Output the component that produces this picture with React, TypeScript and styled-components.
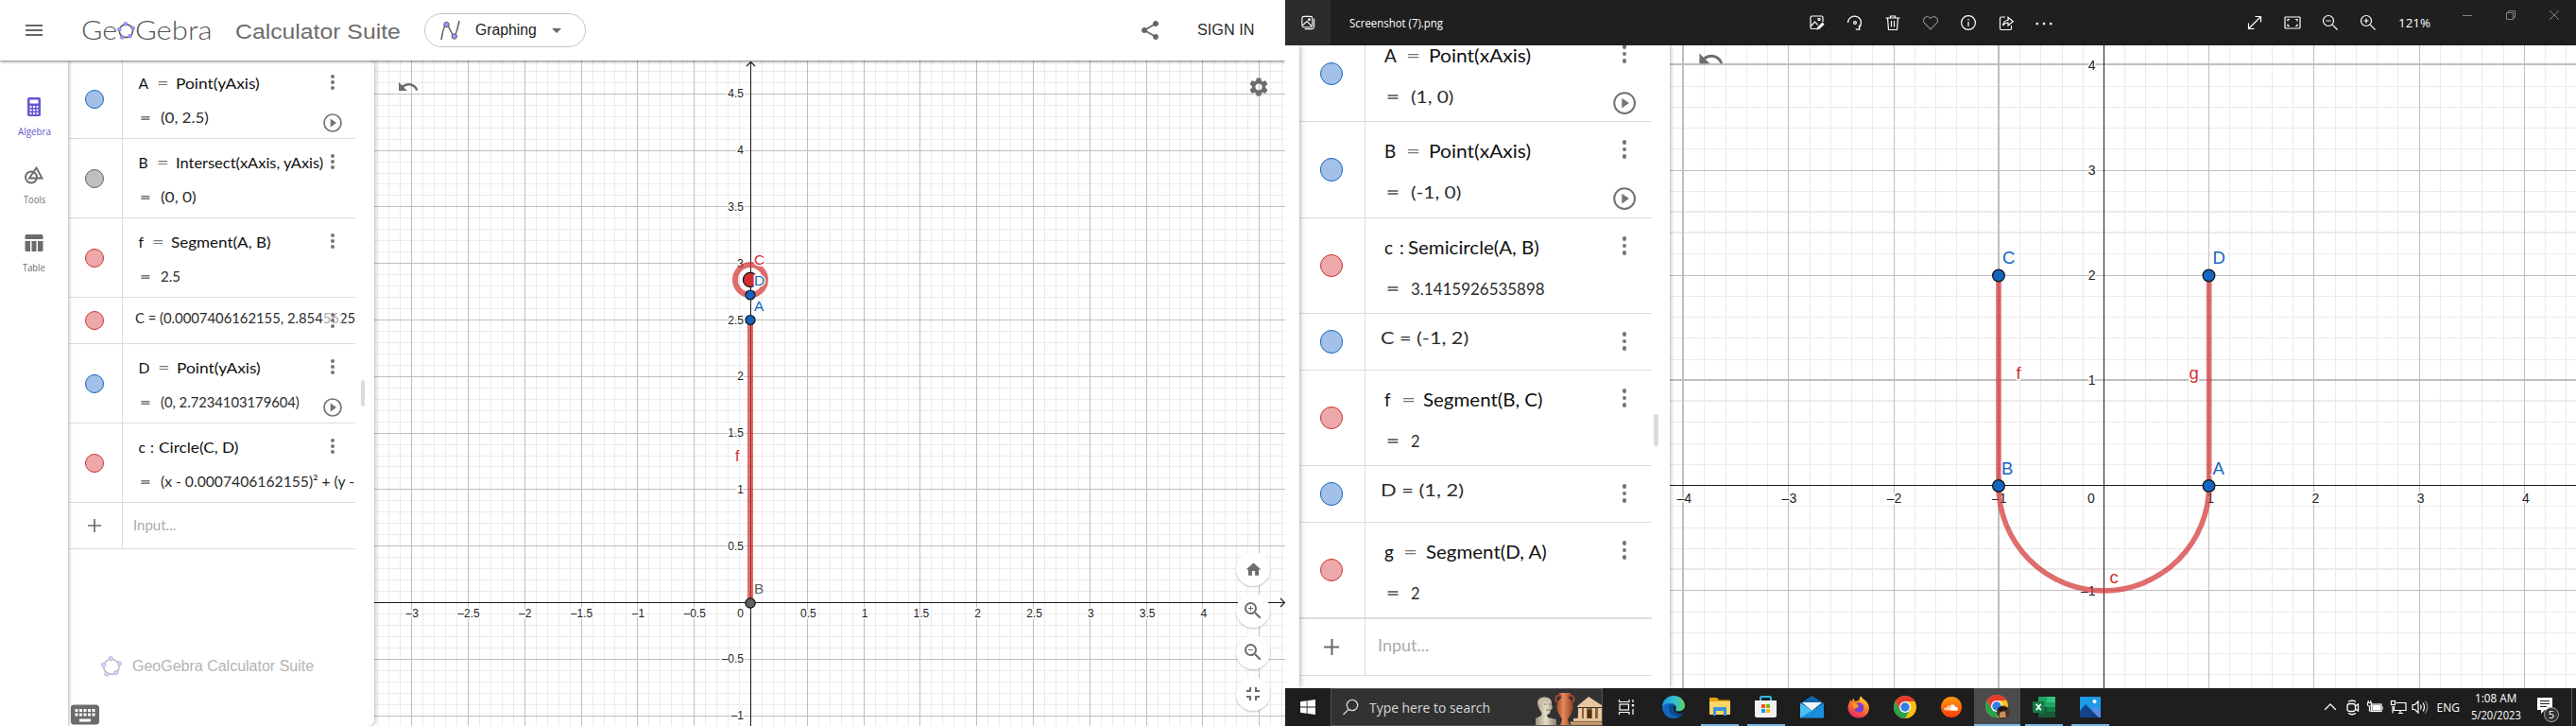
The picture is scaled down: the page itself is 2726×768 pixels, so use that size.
import React, { useLayoutEffect, useRef, ReactNode } from "react";
import styled, { createGlobalStyle, css } from "styled-components";
import {
  MdFullscreenExit, MdHome, MdKeyboard, MdMenu, MdSettings, MdShare, MdUndo, MdZoomIn, MdZoomOut, MdArrowDropDown,
} from "react-icons/md";
import { FaSoundcloud } from "react-icons/fa";

const Global = createGlobalStyle`
  * { box-sizing: border-box; }
  body { margin: 0; background: #fff; font-family: "Liberation Sans", Arial, sans-serif; overflow: hidden; }
  svg { display: block; flex: none; }
`;

/* ---------- text stretched to a given width ---------- */
const FitSpan = styled.span`
  display: inline-block;
  white-space: pre;
  transform-origin: 0 50%;
`;
const FitBox = styled.span<{ $w: number }>`
  display: inline-block;
  width: ${(p) => p.$w}px;
  white-space: pre;
`;
function Fit({ w, children }: { w: number; children: ReactNode }) {
  const ref = useRef<HTMLSpanElement>(null);
  useLayoutEffect(() => {
    const el = ref.current;
    if (el) el.style.transform = `scaleX(${w / el.offsetWidth})`;
  }, [w]);
  return (
    <FitBox $w={w}>
      <FitSpan ref={ref}>{children}</FitSpan>
    </FitBox>
  );
}

/* ---------- shell ---------- */
const Screen = styled.div`
  display: flex;
  width: 2726px;
  height: 768px;
  overflow: hidden;
  background: #fff;
`;
const Browser = styled.div`
  width: 1360px;
  height: 768px;
  display: flex;
  flex-direction: column;
  overflow: hidden;
`;
const Desktop = styled.div`
  width: 1366px;
  height: 768px;
  display: flex;
  flex-direction: column;
  overflow: hidden;
`;
const Body = styled.div`
  flex: 1;
  min-height: 0;
  display: flex;
  overflow: hidden;
`;

/* ---------- GeoGebra header ---------- */
const Header = styled.header`
  height: 64px;
  flex: none;
  display: flex;
  align-items: center;
  background: #fff;
  position: relative;
  z-index: 4;
  padding: 0 32px 0 24px;
  color: #666;
  box-shadow: 0 1px 3px rgba(0, 0, 0, 0.55);
`;
const Brand = styled.div`
  display: flex;
  align-items: center;
  margin-left: 38px;
  width: 163px;
  font: 300 26.5px/36px Lato, sans-serif;
  color: #555;
`;
const Suite = styled.div`
  width: 200px;
  font-size: 22.5px;
  line-height: 36px;
  padding-top: 3px;
  color: #6b6b6b;
`;
const AppPicker = styled.div`
  width: 171px;
  height: 36px;
  border: 1px solid #c4c4c4;
  border-radius: 18px;
  display: flex;
  align-items: center;
  padding-left: 16px;
  color: #1c1c1f;
  font-size: 16px;
  & > span { margin: 0 9px 0 16px; }
  & > svg:last-child { color: #666; }
`;
const HeaderEnd = styled.div`
  margin-left: auto;
  display: flex;
  align-items: center;
  gap: 38px;
  color: #666;
  font-size: 16px;
  & > span { color: #2a2a2a; }
`;

/* ---------- left navigation ---------- */
const Nav = styled.nav`
  width: 72px;
  flex: none;
  padding-top: 32px;
  background: #fff;
  position: relative;
  z-index: 3;
  box-shadow: 0 0 5px rgba(0, 0, 0, 0.42);
`;
const NavItem = styled.div<{ $on?: boolean }>`
  height: 72px;
  display: flex;
  flex-direction: column;
  align-items: center;
  padding-top: 6px;
  color: ${(p) => (p.$on ? "#6557d2" : "#6e6e6e")};
  font: 10.5px/14px "Open Sans", sans-serif;
  & > svg { margin-bottom: 8px; }
`;

/* ---------- algebra panel ---------- */
const Panel = styled.section<{ $w: number; $rounded?: boolean }>`
  width: ${(p) => p.$w}px;
  flex: none;
  background: #fff;
  position: relative;
  z-index: 2;
  display: flex;
  overflow: visible;
  border-radius: ${(p) => (p.$rounded ? "0 5px 7px 0" : "0")};
  box-shadow: 0 0 5px rgba(0, 0, 0, 0.42);
`;
const Edging = styled.div`
  width: 15px;
  flex: none;
  background: #fff;
  position: relative;
  z-index: 3;
  box-shadow: 0 0 6px rgba(0, 0, 0, 0.42);
`;
const List = styled.div<{ $w: number; $up: number }>`
  width: ${(p) => p.$w}px;
  flex: none;
  margin-top: -${(p) => p.$up}px;
  overflow: hidden;
`;
const Row = styled.div<{ $h: number; $thick?: boolean }>`
  position: relative;
  height: ${(p) => p.$h}px;
  border-bottom: ${(p) => (p.$thick ? 2 : 1)}px solid #dcdcdc;
  display: flex;
  overflow: hidden;
`;
const Gutter = styled.div<{ $s: number }>`
  width: ${(p) => Math.round(58 * p.$s)}px;
  border-right: 1px solid #dcdcdc;
  display: flex;
  align-items: center;
  justify-content: center;
  padding-right: 1px;
  flex: none;
`;
const tones = {
  blue: ["#a3c1e8", "#1565c0"],
  grey: ["#bfbfbf", "#616161"],
  red: ["#eda9a9", "#d32f2f"],
};
const Marble = styled.div<{ $s: number; $tone: keyof typeof tones }>`
  width: ${(p) => 20 * p.$s}px;
  height: ${(p) => 20 * p.$s}px;
  border-radius: 50%;
  background: ${(p) => tones[p.$tone][0]};
  border: ${(p) => p.$s}px solid ${(p) => tones[p.$tone][1]};
`;
const Cell = styled.div<{ $s: number; $single?: boolean }>`
  flex: 1;
  min-width: 0;
  overflow: hidden;
  padding: ${(p) => (p.$single ? 3 : 7.4) * p.$s}px 0 0 ${(p) => (p.$single ? 13 : 16.5) * p.$s}px;
  font-family: Lato, sans-serif;
  font-size: ${(p) => (p.$single ? 15 : 15.6) * p.$s}px;
  color: ${(p) => (p.$single ? "#2b2b2b" : "#111")};
`;
const Line = styled.div<{ $s: number; $value?: boolean }>`
  display: flex;
  white-space: pre;
  height: ${(p) => 36 * p.$s}px;
  line-height: ${(p) => 36 * p.$s}px;
  ${(p) => p.$value && css`
    padding-left: ${1.8 * p.$s}px;
    font-size: ${15 * p.$s}px;
    color: #2b2b2b;
  `}
`;
const Slot = styled.span<{ $w: number; $grey?: boolean; $bold?: boolean }>`
  width: ${(p) => p.$w}px;
  flex: none;
  ${(p) => p.$grey && css`color: #777;`}
  ${(p) => p.$bold && css`font-weight: 900;`}
`;
const Placeholder = styled.div<{ $s: number }>`
  padding-left: ${(p) => 11 * p.$s}px;
  font: ${(p) => 15 * p.$s}px/${(p) => 46 * p.$s}px Lato, sans-serif;
  color: #aaa;
`;
const Dots = styled.div<{ $s: number; $fade?: boolean }>`
  position: absolute;
  top: ${(p) => 12 * p.$s}px;
  right: ${(p) => (p.$fade ? 14 : 18) * p.$s}px;
  width: ${(p) => (p.$fade ? 20 : 12) * p.$s}px;
  height: ${(p) => 24 * p.$s}px;
  display: flex;
  flex-direction: column;
  align-items: center;
  justify-content: center;
  gap: ${(p) => 2 * p.$s}px;
  ${(p) => p.$fade && css`background: rgba(255, 255, 255, 0.6);`}
  & > i {
    width: ${(p) => 4 * p.$s}px;
    height: ${(p) => 4 * p.$s}px;
    border-radius: 50%;
    background: #747474;
  }
`;
const PlaySpot = styled.div<{ $s: number }>`
  position: absolute;
  right: ${(p) => 14 * p.$s}px;
  top: ${(p) => 57 * p.$s}px;
`;
const Handle = styled.div<{ $s: number; $top: number; $left: number }>`
  width: ${(p) => 4 * p.$s}px;
  height: ${(p) => 28 * p.$s}px;
  margin: ${(p) => p.$top}px 0 0 ${(p) => p.$left}px;
  border-radius: 2px;
  background: #dcdce0;
`;

type Tone = keyof typeof tones;
interface Item {
  h: number; tone: Tone; text?: string; name?: string; sign?: string; expr?: string;
  nw?: number; ew?: number; w: number; value?: string; vw?: number; play?: boolean; thick?: boolean; fade?: boolean;
}

function AlgebraRow({ item, s }: { item: Item; s: number }) {
  const single = !!item.text;
  return (
    <Row $h={item.h} $thick={item.thick}>
      <Gutter $s={s}><Marble $s={s} $tone={item.tone} /></Gutter>
      <Cell $s={s} $single={single}>
        {single ? (
          <Line $s={s}><Fit w={item.w}>{item.text}</Fit></Line>
        ) : (
          <>
            <Line $s={s}>
              <Slot $w={item.nw!}>{item.name}</Slot>
              <Slot $w={item.ew!} $grey={item.sign === "="}>
                {item.sign === "=" ? <Fit w={12.5 * s}>=</Fit> : item.sign}
              </Slot>
              <Fit w={item.w}>{item.expr}</Fit>
            </Line>
            <Line $s={s} $value>
              <Slot $w={21.7 * s} $grey $bold><Fit w={12 * s}>=</Fit></Slot>
              <Fit w={item.vw!}>{item.value}</Fit>
            </Line>
          </>
        )}
      </Cell>
      <Dots $s={s} $fade={item.fade}><i /><i /><i /></Dots>
      {item.play && (
        <PlaySpot $s={s}>
          <svg width={20 * s} height={20 * s} viewBox="0 0 20 20">
            <circle cx="10" cy="10" r="9" fill="none" stroke="#747474" strokeWidth="1.7" />
            <path d="M7.7 5.6 L14 10 L7.7 14.4 Z" fill="#747474" />
          </svg>
        </PlaySpot>
      )}
    </Row>
  );
}

function InputRow({ h, s }: { h: number; s: number }) {
  return (
    <Row $h={h}>
      <Gutter $s={s}>
        <svg width={14 * s} height={14 * s} viewBox="0 0 14 14">
          <path d="M7 0V14M0 7H14" stroke="#6a6a6a" strokeWidth="1.7" />
        </svg>
      </Gutter>
      <Placeholder $s={s}><Fit w={45 * s}>Input...</Fit></Placeholder>
    </Row>
  );
}

const leftItems: Item[] = [
  { h: 84, tone: "blue", name: "A", sign: "=", expr: "Point(yAxis)", nw: 19, ew: 20, w: 89, value: "(0, 2.5)", vw: 51, play: true },
  { h: 84, tone: "grey", name: "B", sign: "=", expr: "Intersect(xAxis, yAxis)", nw: 19, ew: 20, w: 156, value: "(0, 0)", vw: 38 },
  { h: 84, tone: "red", name: "f", sign: "=", expr: "Segment(A, B)", nw: 14.5, ew: 19.5, w: 106, value: "2.5", vw: 21 },
  { h: 49, tone: "red", text: "C = (0.0007406162155, 2.8545625", w: 233, fade: true },
  { h: 84, tone: "blue", name: "D", sign: "=", expr: "Point(yAxis)", nw: 20.5, ew: 20, w: 89, value: "(0, 2.7234103179604)", vw: 146.5, play: true },
  { h: 84, tone: "red", name: "c", sign: ":", expr: "Circle(C, D)", nw: 12.5, ew: 9, w: 84, value: "(x - 0.0007406162155)² + (y -", vw: 205 },
];
const rightItems: Item[] = [
  { h: 101, tone: "blue", name: "A", sign: "=", expr: "Point(xAxis)", nw: 23, ew: 24, w: 108, value: "(1, 0)", vw: 46, play: true },
  { h: 102, tone: "blue", name: "B", sign: "=", expr: "Point(xAxis)", nw: 23, ew: 24, w: 108, value: "(-1, 0)", vw: 53, play: true },
  { h: 101, tone: "red", name: "c", sign: ":", expr: "Semicircle(A, B)", nw: 16, ew: 9.5, w: 139, value: "3.1415926535898", vw: 142 },
  { h: 60, tone: "blue", text: "C = (-1, 2)", w: 93 },
  { h: 101, tone: "red", name: "f", sign: "=", expr: "Segment(B, C)", nw: 18, ew: 23.5, w: 127, value: "2", vw: 10 },
  { h: 60, tone: "blue", text: "D = (1, 2)", w: 88 },
  { h: 102, tone: "red", name: "g", sign: "=", expr: "Segment(D, A)", nw: 20, ew: 24.5, w: 128, value: "2", vw: 10, thick: true },
];

const PanelColumn = styled.div`
  display: flex;
  flex-direction: column;
`;
const Watermark = styled.div`
  display: flex;
  flex: none;
  align-items: center;
  gap: 11px;
  margin: 112px 0 0 35px;
  height: 24px;
  font-size: 16px;
  color: #b4b4b4;
`;
const KeyboardButton = styled.div`
  margin-top: 21px;
  color: #6c6c6c;
`;

/* ---------- graph ---------- */
const Graph = styled.div`
  flex: 1;
  min-width: 0;
  position: relative;
  background: #fff;
`;
const Corner = styled.div<{ $x: number; $y: number; $ink: string }>`
  position: absolute;
  left: ${(p) => p.$x}px;
  top: ${(p) => p.$y}px;
  color: ${(p) => p.$ink};
`;
const ZoomStack = styled.div`
  position: absolute;
  right: 16px;
  bottom: 16px;
  display: flex;
  flex-direction: column;
  gap: 8px;
`;
const RoundButton = styled.div`
  width: 36px;
  height: 36px;
  border-radius: 50%;
  background: #fff;
  color: #6c6c6c;
  display: flex;
  align-items: center;
  justify-content: center;
  box-shadow: 0 1px 2px rgba(0, 0, 0, 0.25);
`;
const Tick = styled.text`
  font-family: "Liberation Sans", Arial, sans-serif;
  fill: #222;
  stroke: #fff;
  stroke-width: 3px;
  paint-order: stroke;
`;
const minus = (n: number) => (n < 0 ? "–" + -n : String(n));

interface GridProps {
  x0: number; x1: number; y0: number; y1: number; ox: number; oy: number;
  unit: number; minor: number; every: number; wideX?: number[]; wideY?: number[];
}
function Grid({ x0, x1, y0, y1, ox, oy, unit, minor, every, wideX = [], wideY = [] }: GridProps) {
  const small: ReactNode[] = [];
  const big: ReactNode[] = [];
  for (let i = Math.ceil((x0 - ox) / (unit * minor)); i * unit * minor + ox < x1; i++) {
    const major = i % every === 0;
    const wide = wideX.includes(i);
    (major ? big : small).push(
      <rect key={"x" + i} x={Math.floor(ox + i * unit * minor) - (wide ? 1 : 0)} y={y0} width={wide ? 2 : 1} height={y1 - y0} fill={major ? "#bfbfbf" : "#ebebeb"} />,
    );
  }
  for (let j = Math.ceil((oy - y1) / (unit * minor)); oy - j * unit * minor > y0; j++) {
    const major = j % every === 0;
    const wide = wideY.includes(j);
    (major ? big : small).push(
      <rect key={"y" + j} x={x0} y={Math.floor(oy - j * unit * minor) - (wide ? 1 : 0)} width={x1 - x0} height={wide ? 2 : 1} fill={major ? "#bfbfbf" : "#ebebeb"} />,
    );
  }
  return <g shapeRendering="crispEdges">{small}{big}</g>;
}

function Point({ x, y, r, fill = "#1565c0" }: { x: number; y: number; r: number; fill?: string }) {
  return <circle cx={x} cy={y} r={r} fill={fill} stroke="#111" strokeWidth={1.2} />;
}
const BLUE = "#1565c0";
const RED = "#d32f2f";

function LeftPlot() {
  const ox = 794.5, oy = 637.5, u = 119.6;
  const xs = [-3, -2.5, -2, -1.5, -1, -0.5, 0.5, 1, 1.5, 2, 2.5, 3, 3.5, 4];
  const ys = [4.5, 4, 3.5, 3, 2.5, 2, 1.5, 1, 0.5, -0.5, -1];
  return (
    <svg width={964} height={704} viewBox="396 64 964 704">
      <Grid x0={396} x1={1360} y0={64} y1={768} ox={ox} oy={oy} unit={u} minor={0.1} every={5} />
      <rect x={396} y={637} width={963} height={1} fill="#1c1c1f" />
      <rect x={794} y={66} width={1} height={702} fill="#1c1c1f" />
      <path d="M1355 633 L1359.5 637.5 L1355 642 M790 70 L794.5 65.5 L799 70" fill="none" stroke="#1c1c1f" strokeWidth="1.2" />
      {xs.map((v) => <Tick key={v} x={ox + v * u + (v < 0 ? 0.5 : 1)} y={653} fontSize={12} textAnchor="middle">{minus(v)}</Tick>)}
      {ys.map((v) => <Tick key={v} x={787} y={oy - v * u + 4} fontSize={12} textAnchor="end">{minus(v)}</Tick>)}
      <Tick x={783.5} y={653} fontSize={12} textAnchor="middle">0</Tick>
      <rect x={791} y={338} width={6} height={299} fill={RED} opacity={0.7} />
      <circle cx={794} cy={296} r={16} fill="none" stroke={RED} strokeOpacity={0.7} strokeWidth={6} />
      <Point x={794} y={296} r={7.6} fill={RED} />
      <Point x={794} y={312} r={5} />
      <Point x={794} y={338.5} r={5} />
      <Point x={794} y={638} r={5.2} fill="#616161" />
      <Tick x={798} y={279.5} fontSize={15.5} style={{ fill: RED }}>C</Tick>
      <Tick x={798} y={302} fontSize={15.5} style={{ fill: BLUE }}>D</Tick>
      <Tick x={798} y={329} fontSize={15.5} style={{ fill: BLUE }}>A</Tick>
      <Tick x={778} y={488} fontSize={16} style={{ fill: RED }}>f</Tick>
      <Tick x={798} y={628} fontSize={15.5} style={{ fill: "#616161" }}>B</Tick>
    </svg>
  );
}

function RightPlot() {
  const ox = 2226.5, oy = 513.6, u = 111.2;
  return (
    <svg width={959} height={680} viewBox="1767 48 959 680">
      <Grid x0={1767} x1={2726} y0={48} y1={728} ox={ox} oy={oy} unit={u} minor={0.2} every={5}
        wideX={[-20, -5]} wideY={[20, 13, 12, 5, 4, -4]} />
      <rect x={1767} y={513} width={959} height={1} fill="#1c1c1f" />
      <rect x={2226} y={48} width={1} height={680} fill="#1c1c1f" />
      {[-4, -3, -2, -1, 1, 2, 3, 4].map((v) => (
        <Tick key={v} x={ox + v * u + (v < 0 ? 0.5 : 1.5)} y={532} fontSize={14} textAnchor="middle">{minus(v)}</Tick>
      ))}
      {[4, 3, 2, 1, -1].map((v) => (
        <Tick key={v} x={2217.5} y={oy - v * u + 5} fontSize={14} textAnchor="end">{minus(v)}</Tick>
      ))}
      <Tick x={2213} y={532} fontSize={14} textAnchor="middle">0</Tick>
      <g fill="none" stroke={RED} strokeOpacity={0.7} strokeWidth={5.6}>
        <path d="M2115 291.5 V513.5" />
        <path d="M2337.7 291.5 V513.5" />
        <path d="M2115 513.5 A111.3 111.3 0 0 0 2337.7 513.5" />
      </g>
      <Point x={2115} y={291.5} r={6.4} />
      <Point x={2337.5} y={291.5} r={6.4} />
      <Point x={2115} y={514} r={6.4} />
      <Point x={2337.5} y={514} r={6.4} />
      <Tick x={2119} y={279} fontSize={18.5} style={{ fill: BLUE }}>C</Tick>
      <Tick x={2341.5} y={279} fontSize={18.5} style={{ fill: BLUE }}>D</Tick>
      <Tick x={2118} y={502} fontSize={18.5} style={{ fill: BLUE }}>B</Tick>
      <Tick x={2341.5} y={502} fontSize={18.5} style={{ fill: BLUE }}>A</Tick>
      <Tick x={2133.5} y={401} fontSize={18.5} style={{ fill: RED }}>f</Tick>
      <Tick x={2316.5} y={401} fontSize={18.5} style={{ fill: RED }}>g</Tick>
      <Tick x={2232.5} y={617} fontSize={18.5} style={{ fill: RED }}>c</Tick>
    </svg>
  );
}

function Pentagon({ size, line, dot, edge, w }: { size: number; line: string; dot: string; edge: string; w: number }) {
  const pts = [[9.8, 2.5], [18.5, 7.5], [15, 16.8], [5.7, 18.2], [2.4, 9]];
  return (
    <svg width={size} height={size} viewBox="0 0 21 21">
      <ellipse cx="10.4" cy="10.8" rx="7.9" ry="7.6" fill="none" stroke={line} strokeWidth={w} />
      {pts.map(([x, y]) => <circle key={x} cx={x} cy={y} r={2.1} fill={dot} stroke={edge} strokeWidth={0.8} />)}
    </svg>
  );
}

/* ---------- photo viewer bar ---------- */
const PhotoBar = styled.div`
  height: 48px;
  flex: none;
  display: flex;
  background: #1f1f1f;
  color: #fff;
  font-family: "Open Sans", sans-serif;
  position: relative;
  z-index: 4;
`;
const BarCell = styled.div<{ $w: number; $bg?: string; $h?: number; $dim?: boolean }>`
  width: ${(p) => p.$w}px;
  height: ${(p) => p.$h ?? 48}px;
  display: flex;
  align-items: center;
  justify-content: center;
  background: ${(p) => p.$bg ?? "transparent"};
  color: ${(p) => (p.$dim ? "#858585" : "#fff")};
  font-size: 13px;
`;
const FileName = styled.div`
  width: 495px;
  padding-left: 20px;
  font-size: 12px;
  line-height: 49px;
`;
const Spacer = styled.div<{ $w?: number }>`
  ${(p) => (p.$w ? css`width: ${p.$w}px;` : css`flex: 1;`)}
`;
function Ico({ d, size = 18, w = 1.2, children }: { d?: string; size?: number; w?: number; children?: ReactNode }) {
  return (
    <svg width={size} height={size} viewBox="0 0 18 18" fill="none" stroke="currentColor" strokeWidth={w}>
      {d && <path d={d} />}
      {children}
    </svg>
  );
}
const tools = [
  <Ico key="e" d="M10 15.5H3.5a1.5 1.5 0 0 1-1.5-1.5V3.5A1.5 1.5 0 0 1 3.5 2h10A1.5 1.5 0 0 1 15 3.5V8M2 13 6.5 8.2l3.2 3.2"><circle cx="11" cy="5.5" r="1.1" /><path d="M8.5 16.5 9.3 13.8 14.5 8.5l2.2 2.2-5.3 5.1z" fill="currentColor" stroke="none" /></Ico>,
  <Ico key="r" d="M1.5 9A7 7 0 1 1 13 14.5M9.8 16.2h4.8M13.5 11.8V16.4"><circle cx="9" cy="9" r="1.4" /></Ico>,
  <Ico key="t" d="M1.5 4H16.500M6.500 4V2H11.500V4M3.500 4 4.500 16.500H13.500L14.500 4M7.500 7V13.500M10.500 7V13.500" />,
  <Ico key="h" d="M9 16 2.200 9.200A4.100 4.100 0 0 1 9 4.500 4.100 4.100 0 0 1 15.800 9.200Z" />,
  <Ico key="i" d="M9 8V13M9 5V6.500"><circle cx="9" cy="9" r="7.400" /></Ico>,
  <Ico key="s" d="M8 3H4A1.500 1.500 0 0 0 2.500 4.500V15A1.500 1.500 0 0 0 4 16.500H13A1.500 1.500 0 0 0 14.500 15V12M5.500 12C6 8.500 8 6.500 11 6.500V3.300L16.300 7.800 11 12V9C8.500 9 7 10 5.500 12Z" />,
  <Ico key="d" size={20}><g fill="currentColor" stroke="none"><circle cx="2.500" cy="10" r="1.200" /><circle cx="9" cy="10" r="1.200" /><circle cx="15.500" cy="10" r="1.200" /></g></Ico>,
];
const views = [
  <Ico key="x" d="M2.500 15.500 15.500 2.500M9.500 2.500h6v6M2.500 9.500v6h6" />,
  <Ico key="f"><rect x="1" y="3" width="16" height="12" rx="0.500" /><path d="M4 7.500V5.500H6M12 5.500h2V7.500M14 10.500v2H12M6 12.500H4V10.500" /></Ico>,
  <Ico key="o" d="M11.200 11.200 16.500 16.500M4.500 7H9.500"><circle cx="7" cy="7" r="5.500" /></Ico>,
  <Ico key="n" d="M11.200 11.200 16.500 16.500M4.500 7H9.500M7 4.500V9.500"><circle cx="7" cy="7" r="5.500" /></Ico>,
];

/* ---------- taskbar ---------- */
const Taskbar = styled.div`
  height: 40px;
  flex: none;
  display: flex;
  background: #1e1e1e;
  color: #fff;
  position: relative;
  z-index: 4;
  font-family: "Open Sans", sans-serif;
`;
const TaskCell = styled.div<{ $w: number; $on?: boolean }>`
  width: ${(p) => p.$w}px;
  height: 40px;
  display: flex;
  align-items: center;
  justify-content: center;
  background: ${(p) => (p.$on ? "#4b4b4b" : "transparent")};
  font-size: 12px;
`;
const AppCell = styled(TaskCell)<{ $bar?: string }>`
  ${(p) => p.$bar && css`
    background-image: linear-gradient(#76b9ed, #76b9ed);
    background-repeat: no-repeat;
    background-position: center bottom;
    background-size: ${p.$bar} 2px;
  `}
`;
const Search = styled.div`
  width: 288px;
  height: 40px;
  display: flex;
  align-items: center;
  background: #323232;
  border: 1px solid #535353;
  padding-left: 11px;
  font-size: 15px;
  color: #d8d8d8;
  & > span { margin-left: 11px; }
  & > svg:last-child { margin-left: auto; }
`;
const Clock = styled(TaskCell)`
  flex-direction: column;
  line-height: 18px;
  text-align: center;
`;
const NotifyCell = styled(TaskCell)`
  position: relative;
`;
const Badge = styled.div`
  position: absolute;
  left: 17px;
  top: 20px;
  width: 16px;
  height: 16px;
  border-radius: 50%;
  border: 1px solid #a5a5a5;
  background: #333;
  font-size: 11px;
  line-height: 14px;
  text-align: center;
`;
const ShowDesktop = styled.div`
  width: 5px;
  height: 40px;
  border-left: 1px solid #5c5c5c;
`;

function SearchArt() {
  return (
    <svg width={70} height={38} viewBox="0 0 70 38">
      <defs>
        <linearGradient id="vase" x1="0" x2="1"><stop offset="0" stopColor="#a5472a" /><stop offset=".4" stopColor="#e58a5e" /><stop offset="1" stopColor="#97401f" /></linearGradient>
        <linearGradient id="bust" x1="0" x2="1"><stop offset="0" stopColor="#9b917e" /><stop offset=".5" stopColor="#e6decb" /><stop offset="1" stopColor="#8b806c" /></linearGradient>
        <linearGradient id="stone" x1="0" x2="0" y1="0" y2="1"><stop offset="0" stopColor="#f0d0a8" /><stop offset="1" stopColor="#b98a5d" /></linearGradient>
      </defs>
      <path d="M0 38V31L6 28C7 26 6 24 4.500 22 1 16 1 11 6 9 12 7 18 11 17 16L18 20 16 22 15 26 12 27 13 30 22 32V38Z" fill="url(#bust)" />
      <path d="M3 15C2 8 15 6 17 13L14 12 11 14 7 13 6 18Z" fill="#c9bfa9" />
      <path d="M9 16h3M14 16h2M11 22h4" stroke="#7e745f" strokeWidth="1" />
      <path d="M25 4H37V6L34.500 9C40 13 41 19 38 25L34 32 36 38H26L28 32 24 25C21 19 22 13 27.500 9L25 6Z" fill="url(#vase)" />
      <path d="M27 7C21 6 20 10 23 14M35 7C41 6 42 10 39 14" fill="none" stroke="#a5472a" strokeWidth="2" />
      <path d="M44 18 56 8 70 17V19H44Z" fill="#e8c7a0" />
      <path d="M46 20H70V31H44Z" fill="#8a633f" />
      <path d="M45 20h4v11h-4zM51 20h3v11h-3zM60 20h3v11h-3zM66 20h4v11h-4z" fill="#edc99e" />
      <path d="M55 22h4v10h-4z" fill="#4d2f18" />
      <path d="M40 31H70V38H37V34H40Z" fill="url(#stone)" />
      <path d="M38 34.500H70" stroke="#8c6744" strokeWidth="1" />
    </svg>
  );
}

function Chrome({ size = 24 }: { size?: number }) {
  return (
    <svg width={size} height={size} viewBox="0 0 24 24">
      <circle cx="12" cy="12" r="12" fill="#fbc116" />
      <path d="M1.600 6A12 12 0 0 0 12 24L17.200 15 12 12 6.800 15Z" fill="#2aa14c" />
      <path d="M12 6H22.400A12 12 0 0 0 1.600 6L6.800 15Z" fill="#e33b2e" />
      <circle cx="12" cy="12" r="6" fill="#fff" />
      <circle cx="12" cy="12" r="4.700" fill="#2f7de9" />
    </svg>
  );
}
const Edge = () => (
  <svg width="24" height="24" viewBox="0 0 24 24">
    <defs>
      <linearGradient id="edgeTop" x1="0" x2="1"><stop offset="0" stopColor="#1b9de2" /><stop offset=".6" stopColor="#35c1c9" /><stop offset="1" stopColor="#62d750" /></linearGradient>
    </defs>
    <circle cx="12" cy="12" r="12" fill="#1168c0" />
    <path d="M0 11C1 4 6 0 12 0 19 0 24 5 24 10.500 24 14 21 16.500 17 16.500 14.500 16.500 13.500 15.500 14.300 14.300 15.500 12.500 14.500 8 9.500 8 4 8 1 9.500 0 12Z" fill="url(#edgeTop)" />
    <path d="M7 13C7 20 13 23 18 22 20 21.500 22 19.500 22.500 18 17 21 11 18 11.500 13 11.700 11 12 10.500 12.500 10 9 8.500 7 10.500 7 13Z" fill="#0b4a94" />
    <path d="M14.300 14.300C13.500 15.500 14.500 16.500 17 16.500 20 16.500 23 15 24 12V17L21 19C16 20 11.500 17 11.700 13 12 11 13 10 13.800 10.500 14.800 12 14.800 13.300 14.300 14.300Z" fill="#1e1e1e" />
  </svg>
);
const Folder = () => (
  <svg width="22" height="20" viewBox="0 0 22 20">
    <path d="M0 1Q0 0 1 0H8L10 2.500H21Q22 2.500 22 3.500V17H0Z" fill="#e5a50f" />
    <path d="M0 4H22V17Q22 18 21 18H1Q0 18 0 17Z" fill="#fbd568" />
    <path d="M4 11Q4 10 5 10H17Q18 10 18 11V19H15V14H7V19H4Z" fill="#3d94dc" />
  </svg>
);
const Store = () => (
  <svg width="23" height="24" viewBox="0 0 23 24">
    <path d="M6 6V2.500Q6 1 7.500 1H15.500Q17 1 17 2.500V6" fill="none" stroke="#30b9ee" strokeWidth="2" />
    <path d="M0 5H23V21Q23 23 21 23H2Q0 23 0 21Z" fill="#f1f1f1" />
    <path d="M7 9h4v4h-4z" fill="#f25022" /><path d="M12 9h4v4h-4z" fill="#7fba00" />
    <path d="M7 14h4v4h-4z" fill="#00a4ef" /><path d="M12 14h4v4h-4z" fill="#ffb900" />
  </svg>
);
const Mail = () => (
  <svg width="25" height="24" viewBox="0 0 25 24">
    <path d="M0 8 12.500 0 25 8V12H0Z" fill="#1263ab" />
    <path d="M2 7H23L12.500 16Z" fill="#eef3f8" />
    <path d="M0 8 25 23H0Z" fill="#35b1ec" />
    <path d="M25 8 0 23.500H25Z" fill="#1a8fdc" />
    <path d="M0 8 12.500 15.500 0 23.500Z" fill="#4ac0f3" />
  </svg>
);
const Firefox = () => (
  <svg width="24" height="24" viewBox="0 0 24 24">
    <defs><linearGradient id="ff" x1=".8" x2=".3" y1="0" y2="1"><stop offset="0" stopColor="#ffe14a" /><stop offset=".4" stopColor="#ff8b1e" /><stop offset="1" stopColor="#ed2268" /></linearGradient></defs>
    <path d="M3 4 4.500 6.500 6 2.500 8 6 12 5 14 0C16 4 20 4.500 22 9 25 16 20 23.500 12 23.500 4 23.500 0 17 .500 11Z" fill="url(#ff)" />
    <path d="M9 8 13 7 17 10 17 15C15 19 8 18 7 14L10 13 12 11Z" fill="#7a3fd6" />
    <path d="M5 8 9 8 12 11 9 13 7 14Z" fill="#ff9b22" />
  </svg>
);
const Cloud = styled.div`
  width: 22px;
  height: 28px;
  border-radius: 50%;
  display: flex;
  align-items: center;
  justify-content: center;
  color: #fff;
  background: linear-gradient(#ff9a0b, #ff3d0c);
  height: 22px;
`;
const ChromeProfile = () => (
  <svg width="26" height="26" viewBox="0 0 26 26">
    <circle cx="12" cy="12" r="12" fill="#fbc116" />
    <path d="M1.600 6A12 12 0 0 0 12 24L17.200 15 12 12 6.800 15Z" fill="#2aa14c" />
    <path d="M12 6H22.400A12 12 0 0 0 1.600 6L6.800 15Z" fill="#e33b2e" />
    <circle cx="12" cy="12" r="6" fill="#fff" />
    <circle cx="12" cy="12" r="4.700" fill="#2f7de9" />
    <circle cx="19" cy="18.500" r="7" fill="#4a3324" />
    <path d="M15 24C14 18 18 16 21 18L22 24Z" fill="#c58f62" />
    <path d="M13 14 18 12 24 15 20 17 15 18Z" fill="#22170f" />
  </svg>
);
const Excel = () => (
  <svg width="24" height="22" viewBox="0 0 24 22">
    <path d="M6 0H15V11H6Z" fill="#21a366" /><path d="M15 0H24V6H15Z" fill="#33c481" />
    <path d="M15 6H24V11H15Z" fill="#21a366" /><path d="M6 11H15V22H6Z" fill="#185c37" /><path d="M15 11H24V16.500H15Z" fill="#107c41" /><path d="M15 16.500H24V22H15Z" fill="#185c37" />
    <rect x="0" y="5" width="12.500" height="12" rx="1" fill="#107c41" />
    <path d="M3.800 7.800 8.800 14.200M8.800 7.800 3.800 14.200" stroke="#fff" strokeWidth="1.800" />
  </svg>
);
const Photos = () => (
  <svg width="22" height="22" viewBox="0 0 22 22">
    <rect width="22" height="22" rx="1" fill="#1e9be6" />
    <path d="M9 18 16 10 22 16V22H9Z" fill="#5b8ae0" />
    <path d="M0 15 6 8 20 22H0Z" fill="#14438c" />
    <circle cx="15.500" cy="5" r="2" fill="#fff" />
  </svg>
);

const apps: { icon: ReactNode; bar?: string; on?: boolean }[] = [
  { icon: <Edge /> },
  { icon: <Folder />, bar: "40px" },
  { icon: <Store />, bar: "40px" },
  { icon: <Mail /> },
  { icon: <Firefox /> },
  { icon: <Chrome /> },
  { icon: <Cloud><FaSoundcloud size={15} /></Cloud> },
  { icon: <ChromeProfile />, bar: "49px", on: true },
  { icon: <Excel />, bar: "40px" },
  { icon: <Photos />, bar: "40px" },
];

export default function App() {
  return (
    <Screen>
      <Global />
      <Browser>
        <Header>
          <MdMenu size={24} />
          <Brand>
            <Fit w={38}>Ge</Fit>
            <Pentagon size={19} line="#5f5f5f" dot="#9999ff" edge="#8484e6" w={1.8} />
            <Fit w={82}>Gebra</Fit>
          </Brand>
          <Suite><Fit w={175}>Calculator Suite</Fit></Suite>
          <AppPicker>
            <svg width="21" height="22" viewBox="0 0 21 22">
              <path d="M1 21C2.500 12 4.500 5 6.500 5 9 5 12 17 14.500 17 16.500 17 18.500 8 20 1" fill="none" stroke="#666" strokeWidth="1.600" />
              <circle cx="6.500" cy="5" r="2.700" fill="#9999ff" stroke="#555" />
              <circle cx="14.800" cy="17.500" r="2.700" fill="#9999ff" stroke="#555" />
            </svg>
            <span><Fit w={65}>Graphing</Fit></span>
            <MdArrowDropDown size={24} />
          </AppPicker>
          <HeaderEnd>
            <MdShare size={24} />
            <span><Fit w={61}>SIGN IN</Fit></span>
          </HeaderEnd>
        </Header>
        <Body>
          <Nav>
            <NavItem $on>
              <svg width="16" height="22" viewBox="0 0 16 22">
                <rect x="1" y="1" width="14" height="20" rx="1.800" fill="#6557d2" />
                <path d="M3.500 3.500h9v4h-9zM3.500 10h2v2h-2zM7 10h2v2H7zM10.500 10h2v2h-2zM3.500 13.500h2v2h-2zM7 13.500h2v2H7zM10.500 13.500h2v2h-2zM3.500 17h2v2h-2zM7 17h2v2H7zM10.500 17h2v2h-2z" fill="#fff" />
              </svg>
              <Fit w={34.5}>Algebra</Fit>
            </NavItem>
            <NavItem>
              <svg width="22" height="22" viewBox="0 0 22 22" fill="none" stroke="#6c6c6c" strokeWidth="1.900">
                <circle cx="8" cy="13.500" r="6" />
                <path d="M13.500 3.500 6 14.500H19.500Z" />
              </svg>
              <Fit w={23}>Tools</Fit>
            </NavItem>
            <NavItem>
              <svg width="20" height="22" viewBox="0 0 20 22" fill="#6c6c6c">
                <path d="M.500 3.500Q.500 2 2 2H18Q19.500 2 19.500 3.500V7H.500ZM.500 9H6V20H2Q.500 20 .500 18.500ZM7.500 9H12.500V20H7.500ZM14 9H19.500V18.500Q19.500 20 18 20H14Z" />
              </svg>
              <Fit w={24}>Table</Fit>
            </NavItem>
          </Nav>
          <Panel $w={324} $rounded>
            <PanelColumn>
              <List $w={304} $up={1}>
                {leftItems.map((it, i) => <AlgebraRow key={i} item={it} s={1} />)}
                <InputRow h={49} s={1} />
              </List>
              <Watermark>
                <Pentagon size={22} line="#b8b8b8" dot="#d4d4ff" edge="#b3b3cc" w={1.4} />
                <Fit w={192}>GeoGebra Calculator Suite</Fit>
              </Watermark>
              <KeyboardButton><MdKeyboard size={36} /></KeyboardButton>
            </PanelColumn>
            <Handle $s={1} $top={338} $left={6} />
          </Panel>
          <Graph>
            <LeftPlot />
            <Corner $x={24} $y={16} $ink="#6c6c6c"><MdUndo size={24} /></Corner>
            <Corner $x={924} $y={16} $ink="#6c6c6c"><MdSettings size={24} /></Corner>
            <ZoomStack>
              <RoundButton><MdHome size={19} /></RoundButton>
              <RoundButton><MdZoomIn size={24} /></RoundButton>
              <RoundButton><MdZoomOut size={24} /></RoundButton>
              <RoundButton><MdFullscreenExit size={24} /></RoundButton>
            </ZoomStack>
          </Graph>
        </Body>
      </Browser>

      <Desktop>
        <PhotoBar>
          <BarCell $w={48} $bg="#2b2b2b">
            <Ico size={17} d="M5 15.500H12.500A3 3 0 0 0 15.500 12.500V4M2.500 11.500 7.500 7 13 12.500">
              <rect x="2" y="1.500" width="11.500" height="12" rx="2" /><circle cx="10" cy="5" r=".9" />
            </Ico>
          </BarCell>
          <FileName><Fit w={99}>Screenshot (7).png</Fit></FileName>
          {tools.map((t, i) => <BarCell key={i} $w={40} $dim={i === 3}>{t}</BarCell>)}
          <Spacer />
          {views.map((t, i) => <BarCell key={i} $w={40}>{t}</BarCell>)}
          <BarCell $w={57}><Fit w={34}>121%</Fit></BarCell>
          <Spacer $w={5} />
          <BarCell $w={46} $h={32} $dim><Ico size={18} w={1} d="M4 9.500H14" /></BarCell>
          <BarCell $w={46} $h={32} $dim><Ico size={18} w={1} d="M4.500 6.500H11.500V13.500H4.500ZM6.500 6.500V4.500H13.500V11.500H11.500" /></BarCell>
          <BarCell $w={46} $h={32} $dim><Ico size={18} w={1} d="M4 4 14 14M14 4 4 14" /></BarCell>
        </PhotoBar>
        <Body>
          <Edging />
          <Panel $w={392}>
            <List $w={373} $up={20}>
              {rightItems.map((it, i) => <AlgebraRow key={i} item={it} s={1.21} />)}
              <InputRow h={60} s={1.21} />
            </List>
            <Handle $s={1.21} $top={390} $left={2} />
          </Panel>
          <Graph>
            <RightPlot />
            <Corner $x={29} $y={0} $ink="#6c6c6c"><MdUndo size={29} /></Corner>
          </Graph>
        </Body>
        <Taskbar>
          <TaskCell $w={48}>
            <svg width="16" height="16" viewBox="0 0 16 16"><path d="M0 2.300 6.700 1.300V7.600H0ZM7.500 1.200 16 0V7.600H7.500ZM0 8.400H6.700V14.700L0 13.700ZM7.500 8.400H16V16L7.500 14.800Z" fill="#fff" /></svg>
          </TaskCell>
          <Search>
            <Ico size={18} w={1.3} d="M7 11.500 1.500 17"><circle cx="11" cy="7" r="5.700" /></Ico>
            <span><Fit w={128}>Type here to search</Fit></span>
            <SearchArt />
          </Search>
          <TaskCell $w={50}>
            <Ico size={18} d="M1.500 1V3.500H12V1M1.500 17V14.500H12V17M16 1V4M16 11V17"><rect x="2" y="6" width="9.500" height="6" /><rect x="14.800" y="6" width="2.400" height="2.400" fill="currentColor" stroke="none" /></Ico>
          </TaskCell>
          {apps.map((a, i) => <AppCell key={i} $w={49} $bar={a.bar} $on={a.on}>{a.icon}</AppCell>)}
          <Spacer />
          <TaskCell $w={31}><Ico size={16} w={1.5} d="M2.500 12 9 5.500 15.500 12" /></TaskCell>
          <TaskCell $w={17}><Ico size={18} w={1.3} d="M4 3.500Q8 .500 12 3.500M4 15.500Q8 18 12 15.500M11.500 8 14.500 6V13L11.500 11"><rect x="3" y="5.500" width="8.500" height="8" rx="2.500" /></Ico></TaskCell>
          <TaskCell $w={30}><Ico size={18} w={1.2} d="M1 4.500H6M2.200 2V4.500M4.800 2V4.500M1.500 4.500V7Q3.500 9.500 5.500 7V4.500M3.500 8.500V13H5"><rect x="5.500" y="6" width="10.500" height="7.500" /><rect x="7" y="7.500" width="7.500" height="4.500" fill="currentColor" /><path d="M17 8.500V11.500" /></Ico></TaskCell>
          <TaskCell $w={20}><Ico size={18} w={1.2} d="M6.500 4.500H17V12.500H4.500V8M9 15.500H14M11 12.500V15.500M3 8V15.500"><rect x="1.500" y="2.500" width="4" height="4" /></Ico></TaskCell>
          <TaskCell $w={26}><Ico size={18} w={1.2} d="M1 6.500H3.500L7 3V15L3.500 11.500H1ZM9.500 6.500Q11 9 9.500 11.500M12 4.500Q15 9 12 13.500"><path d="M14.500 2.500Q19 9 14.500 15.500" strokeOpacity=".5" /></Ico></TaskCell>
          <TaskCell $w={33}><Fit w={24}>ENG</Fit></TaskCell>
          <Clock $w={68}><Fit w={44}>1:08 AM</Fit><Fit w={53}>5/20/2023</Fit></Clock>
          <NotifyCell $w={46}>
            <svg width="26" height="20" viewBox="0 0 26 20">
              <path d="M0 0H16V13H8L4 17V13H0Z" fill="#fff" />
              <path d="M3 3.500H13M3 6.500H13M3 9.500H10" stroke="#1e1e1e" strokeWidth="1" />
            </svg>
            <Badge>5</Badge>
          </NotifyCell>
          <ShowDesktop />
        </Taskbar>
      </Desktop>
    </Screen>
  );
}
